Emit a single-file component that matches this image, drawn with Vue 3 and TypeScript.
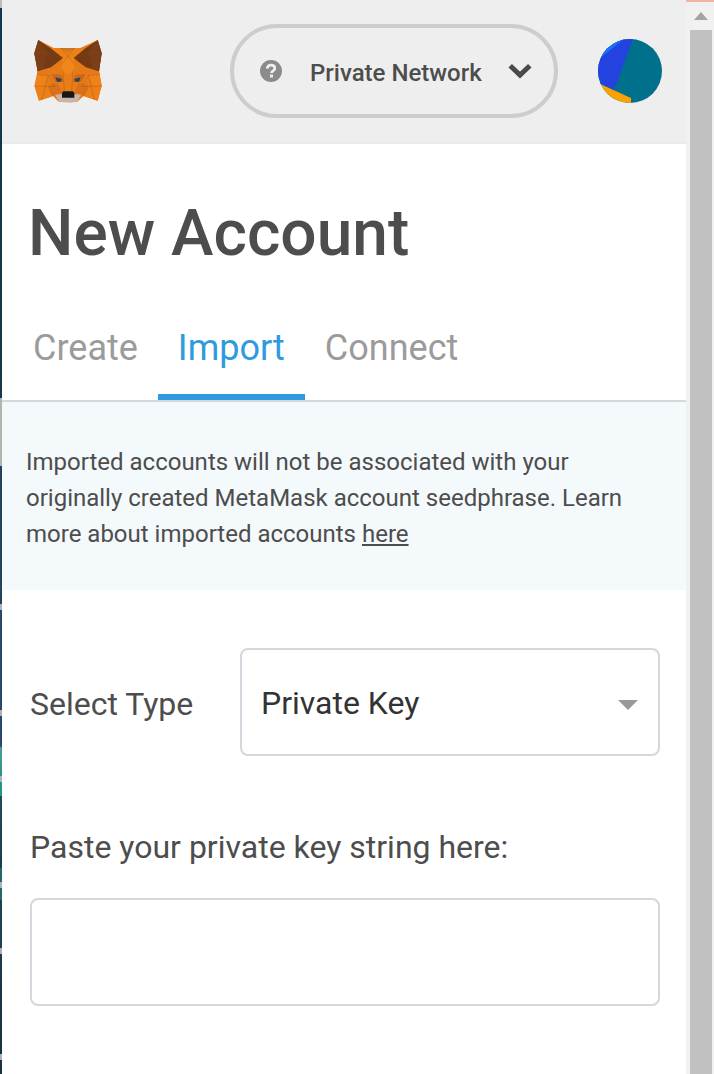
<script setup lang="ts">
import { ref } from 'vue'

interface Tab {
  id: string
  label: string
}

interface Facet {
  points: string
  fill: string
}

const tabs: Tab[] = [
  { id: 'create', label: 'Create' },
  { id: 'import', label: 'Import' },
  { id: 'connect', label: 'Connect' },
]
const activeTab = ref('import')
const importType = ref('Private Key')
const privateKey = ref('')

const foxFacets: Facet[] = [
  { points: '54,46 100,70 180,70 232,46 244,86 236,138 244,182 232,228 190,214 170,232 116,232 98,214 56,228 42,184 52,138 42,86', fill: '#e97d18' },
  { points: '100,70 180,70 190,78 162,100 122,100 92,70', fill: '#ea8119' },
  { points: '118,70 166,70 142,82', fill: '#d0721f' },
  { points: '122,100 162,100 160,138 142,150 126,138', fill: '#ef871b' },
  { points: '52,138 90,126 126,104 120,150 84,152 50,150', fill: '#e67a17' },
  { points: '236,138 198,126 160,104 166,150 204,152 238,150', fill: '#e67a17' },
  { points: '50,150 84,152 66,186 44,184', fill: '#ef831a' },
  { points: '238,150 204,152 222,186 244,184', fill: '#ef831a' },
  { points: '44,184 84,186 98,214 56,228', fill: '#ed7f16' },
  { points: '244,184 204,186 190,214 232,228', fill: '#ed7f16' },
  { points: '92,148 124,150 130,172 104,172', fill: '#cf681a' },
  { points: '196,148 164,150 158,172 184,172', fill: '#cf681a' },
  { points: '84,180 112,174 126,204 98,214', fill: '#db701a' },
  { points: '204,180 174,174 162,204 190,214', fill: '#db701a' },
  { points: '54,46 90,70 128,100 92,128 52,140 42,86', fill: '#733a14' },
  { points: '232,46 196,70 160,100 196,128 236,140 244,86', fill: '#733a14' },
  { points: '54,46 80,84 70,132 52,140 42,86', fill: '#7b3e17' },
  { points: '232,46 206,84 216,132 236,140 244,86', fill: '#7b3e17' },
  { points: '105,158 124,162 122,171 110,172', fill: '#374450' },
  { points: '181,158 162,162 164,171 176,172', fill: '#374450' },
  { points: '104,210 126,208 162,208 182,210 172,230 154,234 118,232', fill: '#c8b5a7' },
  { points: '128,200 158,200 162,206 162,219 125,219 125,206', fill: '#161616' },
]
</script>

<template>
  <div class="window">
    <div class="backdrop" aria-hidden="true"></div>
    <main class="panel">
      <header class="header">
        <svg class="logo" viewBox="41 43 204 192" preserveAspectRatio="none" role="img" aria-label="MetaMask">
          <polygon v-for="f in foxFacets" :key="f.points" :points="f.points" :fill="f.fill" />
          <path
            d="M54 46 80 84 42 86M80 84 126 100M80 84 52 138M232 46 206 84 244 86M206 84 162 100M206 84 236 138M122 70 160 116M162 70 126 116M52 150 84 152 64 226M84 152 104 186 44 184M238 150 204 152 222 226M204 152 184 186 244 184M128 138 132 200M158 138 154 200M84 186 98 214M204 186 190 214"
            fill="none" stroke="#8c4a19" stroke-width="2" opacity=".45"
          />
        </svg>
        <button class="network" type="button">
          <svg class="help" viewBox="0 0 22 22" aria-hidden="true">
            <circle cx="11" cy="11" r="11" fill="#8b8b8b" />
            <path d="M7.200 8.600C7.400 6.200 9 5.200 11.100 5.200c2.200 0 3.700 1.200 3.700 3.100 0 2.600-3.300 2.400-3.300 4.700" fill="none" stroke="#eee" stroke-width="2.800" />
            <rect x="10" y="14.500" width="3" height="3" fill="#eee" />
          </svg>
          <span class="network-name">Private Network</span>
          <svg class="chevron" viewBox="0 0 24 16" aria-hidden="true">
            <path d="M2.200 2.800 12 12l9.800-9.200" fill="none" stroke="#4a4a4a" stroke-width="5" />
          </svg>
        </button>
        <button class="avatar" type="button" aria-label="My accounts">
          <svg viewBox="0 0 64 64" aria-hidden="true">
            <defs>
              <clipPath id="avatar-clip"><circle cx="32" cy="32" r="32" /></clipPath>
            </defs>
            <g clip-path="url(#avatar-clip)">
              <rect width="64" height="64" fill="#01708d" />
              <path d="M0 0h35L16 51 0 44z" fill="#2342e0" />
              <path d="M0 0h26L0 21z" fill="#1971f5" />
              <path d="M0 44 33 59v5H0z" fill="#faa200" />
            </g>
          </svg>
        </button>
      </header>

      <h1 class="title">New Account</h1>
      <nav class="tabs" aria-label="Account actions">
        <button
          v-for="tab in tabs"
          :key="tab.id"
          type="button"
          class="tab"
          :class="{ active: tab.id === activeTab }"
          @click="activeTab = tab.id"
        >{{ tab.label }}</button>
      </nav>

      <p class="notice">
        Imported accounts will not be associated with your originally created MetaMask account seedphrase. Learn more about imported accounts <a href="#">here</a>
      </p>

      <form class="form" @submit.prevent>
        <div class="row">
          <label class="label type-label" for="import-type">Select Type</label>
          <div class="select-box">
            <select id="import-type" v-model="importType" class="field select">
              <option>Private Key</option>
              <option>JSON File</option>
            </select>
            <svg class="caret" viewBox="0 0 20 10" aria-hidden="true">
              <path d="M0 0h20L10 10z" fill="#999" />
            </svg>
          </div>
        </div>
        <label class="label key-label" for="private-key">Paste your private key string here:</label>
        <input id="private-key" v-model="privateKey" class="field" type="password" autocomplete="off" />
      </form>
    </main>
    <div class="scrollbar" aria-hidden="true">
      <svg class="scroll-up" viewBox="0 0 14 8">
        <path d="M0 8 7 0l7 8z" fill="#a3a3a3" />
      </svg>
      <div class="thumb"></div>
    </div>
  </div>
</template>

<style>
body {
  margin: 0;
}
</style>

<style scoped>
.window {
  display: flex;
  min-height: 100vh;
  font-family: Roboto, "Liberation Sans", sans-serif;
  color: #4d4d4d;
  background: #fff;
}

button,
select,
input {
  margin: 0;
  font-family: inherit;
  color: inherit;
}

button {
  border: 0;
  background: none;
  cursor: pointer;
}

.backdrop {
  flex: none;
  width: 2px;
  background: linear-gradient(
    #c0bcbb 0 8px,
    #13364f 8px, #17394c 398px,
    #b3b3b0 398px 466px,
    #24435a 466px 604px,
    #b0b0b2 604px 610px,
    #29496a 610px 710px,
    #b0b0b2 710px 716px,
    #29496a 716px 746px,
    #4a9f92 748px, #289583 776px,
    #b0b0b2 776px 782px,
    #289583 782px 796px,
    #25485a 796px, #1c3d50 868px,
    #246968 868px 882px,
    #b0b0b2 882px 888px,
    #246968 888px 900px,
    #1f4053 900px 948px,
    #b0b0b2 948px 954px,
    #1b3a4b 954px, #17333f 1054px,
    #b0b0b2 1054px 1060px,
    #17333f 1060px
  );
}

.panel {
  flex: 1;
  min-width: 0;
}

.header {
  display: flex;
  align-items: center;
  padding: 24px 24px 24px 32px;
  border-bottom: 2px solid #eaeaea;
  background: #eee;
}

.logo {
  width: 68px;
  height: 64px;
  margin-right: auto;
}

.network {
  display: flex;
  align-items: center;
  width: 328px;
  height: 94px;
  margin-right: 40px;
  padding: 0 22px 0 26px;
  border: 4px solid #cdcdcd;
  border-radius: 47px;
}

.help {
  width: 22px;
  height: 22px;
  margin-right: 28px;
}

.network-name {
  padding-top: 4px;
  font-size: 24px;
  font-weight: 500;
  line-height: 32px;
  white-space: nowrap;
}

.chevron {
  width: 24px;
  height: 16px;
  margin-left: auto;
}

.avatar {
  width: 64px;
  height: 64px;
  padding: 0;
}

.avatar svg {
  display: block;
}

.title {
  margin: 0;
  padding: 48px 26px;
  font-size: 64px;
  font-weight: 500;
  line-height: 84px;
}

.tabs {
  display: flex;
  padding-left: 11px;
  border-bottom: 2px solid #d2d8dd;
}

.tab {
  padding: 0 20px 22px;
  border-bottom: 6px solid transparent;
  font-size: 36px;
  line-height: 48px;
  color: #9b9b9b;
}

.tab.active {
  border-color: #2f9ae0;
  color: #2f9ae0;
}

.notice {
  margin: 0;
  padding: 42px 24px 38px;
  font-size: 24px;
  line-height: 36px;
  background: #f4f9fc;
}

.notice a {
  color: inherit;
}

.form {
  padding: 58px 26px 68px 28px;
}

.row {
  display: flex;
  align-items: center;
  justify-content: space-between;
}

.label {
  font-size: 32px;
  line-height: 44px;
}

.type-label {
  padding-top: 4px;
}

.key-label {
  display: block;
  padding: 69px 0 29px;
}

.select-box {
  position: relative;
  width: 420px;
}

.field {
  display: block;
  box-sizing: border-box;
  width: 100%;
  height: 108px;
  padding: 0 20px;
  border: 2px solid #d2d8dd;
  border-radius: 8px;
  background: #fff;
  font-size: 32px;
}

.select {
  padding: 2px 19px 0;
  appearance: none;
  color: #333;
}

.caret {
  position: absolute;
  top: 52px;
  right: 22px;
  width: 20px;
  height: 10px;
  pointer-events: none;
}

.scrollbar {
  display: flex;
  flex: none;
  flex-direction: column;
  align-items: center;
  box-sizing: border-box;
  width: 28px;
  padding-right: 2px;
  padding-left: 4px;
  border-top: 2px solid #f3b2a3;
  background: #f1f1f1;
}

.scroll-up {
  width: 14px;
  height: 8px;
  margin: 10px 0;
}

.thumb {
  flex: 1;
  width: 100%;
  background: #c1c1c1;
}
</style>
